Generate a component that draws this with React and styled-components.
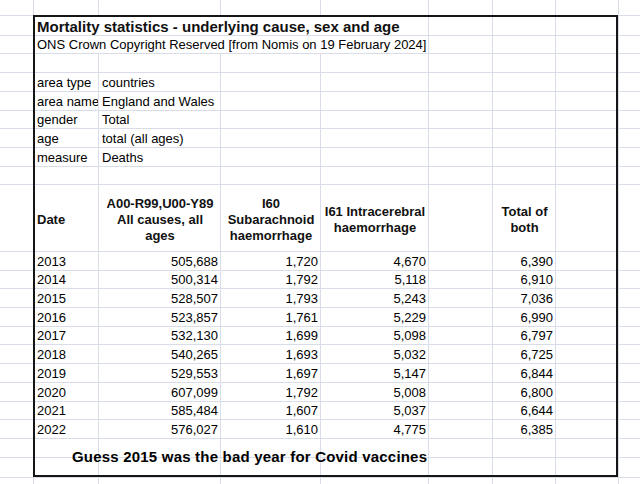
import styled, { createGlobalStyle } from "styled-components"

const GlobalStyle = createGlobalStyle`
  html, body {
    margin: 0;
    padding: 0;
    background: #ffffff;
  }
  body {
    font-family: "Liberation Sans", Arial, sans-serif;
  }
`

const COLS = [33, 65, 122, 100, 108, 64, 63, 63]
const ROWS = [15, 20, 18, 19, 19, 19, 18, 19, 19, 18, 67, ...Array(10).fill(18.7), 19, 20]

const info = [
  ["area type", "countries"],
  ["area name", "England and Wales"],
  ["gender", "Total"],
  ["age", "total (all ages)"],
  ["measure", "Deaths"],
]

const deaths = [
  ["2013", "505,688", "1,720", "4,670", "6,390"],
  ["2014", "500,314", "1,792", "5,118", "6,910"],
  ["2015", "528,507", "1,793", "5,243", "7,036"],
  ["2016", "523,857", "1,761", "5,229", "6,990"],
  ["2017", "532,130", "1,699", "5,098", "6,797"],
  ["2018", "540,265", "1,693", "5,032", "6,725"],
  ["2019", "529,553", "1,697", "5,147", "6,844"],
  ["2020", "607,099", "1,792", "5,008", "6,800"],
  ["2021", "585,484", "1,607", "5,037", "6,644"],
  ["2022", "576,027", "1,610", "4,775", "6,385"],
]

const Sheet = styled.div`
  display: grid;
  width: 640px;
  height: 484px;
  overflow: hidden;
  grid-template-columns: ${COLS.map((w) => w + "px").join(" ")} 1fr;
  grid-template-rows: ${ROWS.map((h) => h + "px").join(" ")} 1fr;
  color: #000;
  font-size: 13px;
`

const Cell = styled.div`
  grid-row: ${(p) => p.$row + 1};
  grid-column: ${(p) => p.$col + 1} / span ${(p) => p.$span || 1};
  box-sizing: border-box;
  min-width: 0;
  border-top: ${(p) => (p.$row === 0 ? "none" : "1px solid #d9dce9")};
  border-left: ${(p) => (p.$col === 0 ? "none" : "1px solid #d9dce9")};
  display: flex;
  align-items: ${(p) => (p.$middle ? "center" : "flex-end")};
  justify-content: ${(p) =>
    p.$align === "right" ? "flex-end" : p.$align === "center" ? "center" : "flex-start"};
  text-align: ${(p) => p.$align || "left"};
  padding: ${(p) => (p.$middle ? "4px 2px 1px 3px" : "0 2px 1px 3px")};
  font-size: ${(p) => p.$size || 13}px;
  font-weight: ${(p) => (p.$bold ? 700 : 400)};
  line-height: ${(p) => (p.$wrap ? "16px" : "15px")};
  white-space: ${(p) => (p.$wrap ? "normal" : "nowrap")};
  color: ${(p) => (p.$bold ? "#111" : "#000")};
`

const Frame = styled.div`
  grid-row: 2 / 24;
  grid-column: 2 / 9;
  border: 2px solid #151515;
  z-index: 2;
  pointer-events: none;
`

const Note = styled.div`
  grid-row: 22 / 24;
  grid-column: 2 / 7;
  z-index: 1;
  display: flex;
  align-items: center;
  padding: 0 0 1px 39px;
  font-size: 15px;
  font-weight: 700;
  letter-spacing: 0.2px;
  white-space: nowrap;
  color: #000;
`

function buildCells() {
  const cells = []
  const put = (row, col, text, opts = {}) =>
    cells.push(
      <Cell key={row + "-" + col} $row={row} $col={col} {...opts}>
        {text}
      </Cell>
    )

  for (let r = 0; r < ROWS.length + 1; r++) {
    if (r === 1 || r === 2) {
      put(r, 0, "")
      if (r === 1) put(r, 1, "Mortality statistics - underlying cause, sex and age", { $span: 4, $bold: true, $size: 15 })
      else put(r, 1, "ONS Crown Copyright Reserved [from Nomis on 19 February 2024]", { $span: 4 })
      for (let c = 5; c < 9; c++) put(r, c, "")
      continue
    }
    for (let c = 0; c < 9; c++) {
      let text = ""
      let opts = {}
      if (r >= 4 && r <= 8 && (c === 1 || c === 2)) {
        text = info[r - 4][c - 1]
      } else if (r === 10) {
        opts = { $bold: true, $middle: true, $wrap: true, $align: "center" }
        if (c === 1) {
          text = "Date"
          opts.$align = "left"
        }
        if (c === 2) text = "A00-R99,U00-Y89 All causes, all ages"
        if (c === 3) text = "I60 Subarachnoid haemorrhage"
        if (c === 4) text = "I61 Intracerebral haemorrhage"
        if (c === 6) text = "Total of both"
      } else if (r >= 11 && r <= 20) {
        const d = deaths[r - 11]
        if (c === 1) text = d[0]
        else if (c >= 2 && c <= 4) {
          text = d[c - 1]
          opts = { $align: "right" }
        } else if (c === 6) {
          text = d[4]
          opts = { $align: "right" }
        }
      }
      put(r, c, text, opts)
    }
  }
  return cells
}

export default function App() {
  return (
    <>
      <GlobalStyle />
      <Sheet>
        {buildCells()}
        <Frame />
        <Note>Guess 2015 was the bad year for Covid vaccines</Note>
      </Sheet>
    </>
  )
}
